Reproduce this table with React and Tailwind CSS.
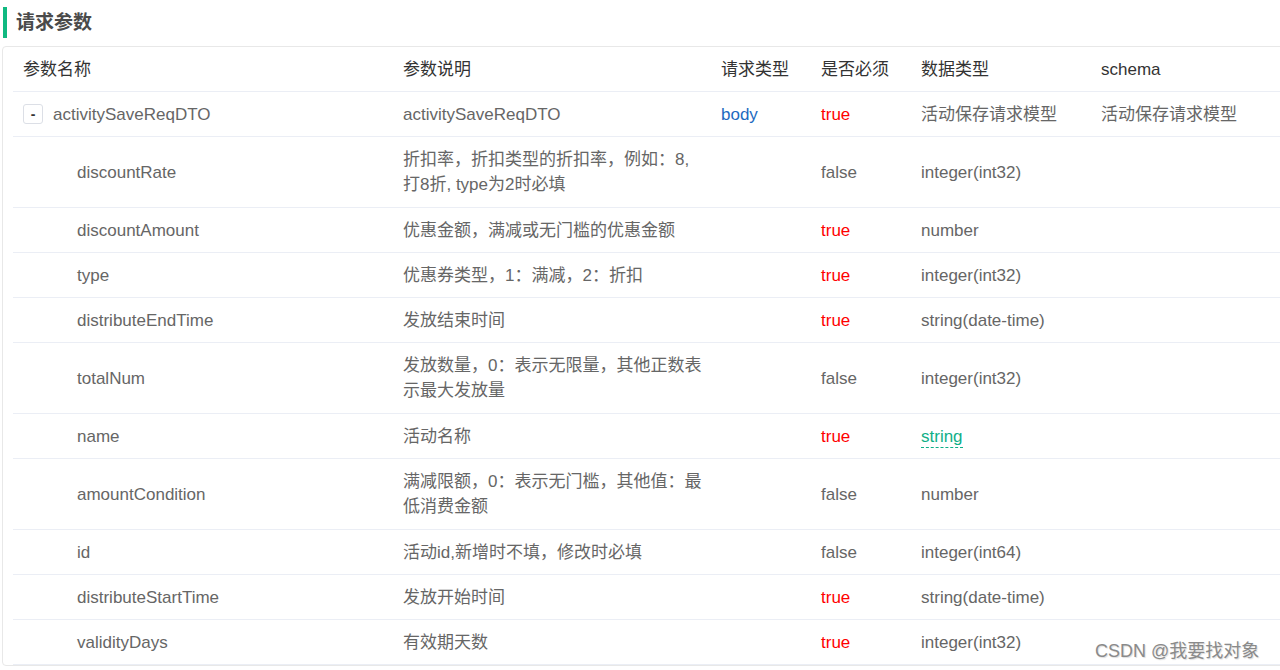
import React from "react";

const rows = [
  { name: "discountRate", desc: ["折扣率，折扣类型的折扣率，例如：8,", "打8折, type为2时必填"], req: "false", type: "integer(int32)" },
  { name: "discountAmount", desc: ["优惠金额，满减或无门槛的优惠金额"], req: "true", type: "number" },
  { name: "type", desc: ["优惠券类型，1：满减，2：折扣"], req: "true", type: "integer(int32)" },
  { name: "distributeEndTime", desc: ["发放结束时间"], req: "true", type: "string(date-time)" },
  { name: "totalNum", desc: ["发放数量，0：表示无限量，其他正数表", "示最大发放量"], req: "false", type: "integer(int32)" },
  { name: "name", desc: ["活动名称"], req: "true", type: "string", link: true },
  { name: "amountCondition", desc: ["满减限额，0：表示无门槛，其他值：最", "低消费金额"], req: "false", type: "number" },
  { name: "id", desc: ["活动id,新增时不填，修改时必填"], req: "false", type: "integer(int64)" },
  { name: "distributeStartTime", desc: ["发放开始时间"], req: "true", type: "string(date-time)" },
  { name: "validityDays", desc: ["有效期天数"], req: "true", type: "integer(int32)" },
];

const td = "px-[10px] py-[9.5px] align-middle border-b border-[#ebeef5]";

export default function App() {
  return (
    <div
      className="relative w-[1280px] h-[670px] overflow-hidden bg-white text-[17px] leading-[25px] text-[#666]"
      style={{ fontFamily: '"Liberation Sans", "Noto Sans CJK SC", sans-serif' }}
    >
      <div className="flex items-center h-[31px] mt-[7px] ml-[3px]">
        <div className="w-[4px] h-full bg-[#10b981]" />
        <div className="ml-[9px] text-[19px] font-bold text-[#4a4a4a]">请求参数</div>
      </div>
      <div className="mt-[8px] ml-[2px] w-[1300px] border border-[#e8e8e8] rounded-[4px] pl-[10px] pb-0">
        <table className="w-[1288px] border-collapse table-fixed">
          <colgroup>
            <col className="w-[380px]" />
            <col className="w-[318px]" />
            <col className="w-[100px]" />
            <col className="w-[100px]" />
            <col className="w-[180px]" />
            <col />
          </colgroup>
          <thead>
            <tr className="text-[#333] text-left">
              <th className={`${td} font-normal`}>参数名称</th>
              <th className={`${td} font-normal`}>参数说明</th>
              <th className={`${td} font-normal`}>请求类型</th>
              <th className={`${td} font-normal`}>是否必须</th>
              <th className={`${td} font-normal`}>数据类型</th>
              <th className={`${td} font-normal`}>schema</th>
            </tr>
          </thead>
          <tbody>
            <tr>
              <td className={td}>
                <div className="flex items-center">
                  <span className="w-[20px] h-[20px] border border-[#dcdfe6] rounded-[3px] flex items-center justify-center text-[14px] leading-none text-[#333] font-bold">-</span>
                  <span className="ml-[10px]">activitySaveReqDTO</span>
                </div>
              </td>
              <td className={td}>activitySaveReqDTO</td>
              <td className={`${td} text-[#1e6bc0]`}>body</td>
              <td className={`${td} text-[#ff0000]`}>true</td>
              <td className={td}>活动保存请求模型</td>
              <td className={td}>活动保存请求模型</td>
            </tr>
            {rows.map((r) => (
              <tr key={r.name}>
                <td className={`${td} pl-[64px]`}>{r.name}</td>
                <td className={td}>
                  {r.desc.map((l, i) => (
                    <div key={i} className={`whitespace-nowrap ${r.desc.length > 1 ? "leading-[25.5px]" : ""}`}>{l}</div>
                  ))}
                </td>
                <td className={td}></td>
                <td className={`${td} ${r.req === "true" ? "text-[#ff0000]" : ""}`}>{r.req}</td>
                <td className={td}>
                  {r.link ? (
                    <span className="text-[#10af88] border-b border-dashed border-[#10af88] leading-[20px] inline-block">{r.type}</span>
                  ) : (
                    r.type
                  )}
                </td>
                <td className={td}></td>
              </tr>
            ))}
          </tbody>
        </table>
      </div>
      <div
        className="absolute left-[1095px] top-[638px] text-[18px] leading-[26px] text-[#8a8a8a]"
        style={{ textShadow: "1px 1px 1px #ddd" }}
      >
        CSDN @我要找对象
      </div>
    </div>
  );
}
